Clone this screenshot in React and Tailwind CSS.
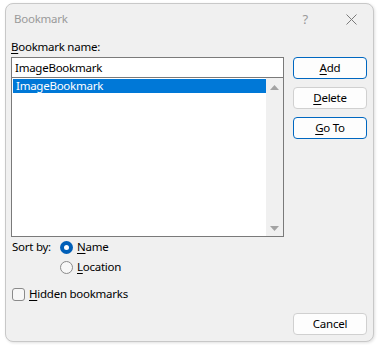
import React from 'react'

function Key({ children }) {
  return <span className="underline underline-offset-[2px] decoration-[1px]">{children}</span>
}

function Button({ primary, children }) {
  return (
    <button
      className={
        primary
          ? 'h-[22px] w-[74px] rounded-[4px] border border-[#0067c0] bg-[#fdfdfd] leading-[16px] text-black'
          : 'h-[22px] w-[74px] rounded-[4px] border border-[#d0d0d0] bg-[#fdfdfd] leading-[16px] text-black'
      }
    >
      {children}
    </button>
  )
}

function Radio({ checked, children }) {
  return (
    <div className="flex h-[16px] items-center gap-[4px]">
      {checked ? (
        <span className="flex h-[13px] w-[13px] items-center justify-center rounded-full bg-[#005fb8]">
          <span className="h-[5px] w-[5px] rounded-full bg-white" />
        </span>
      ) : (
        <span className="h-[13px] w-[13px] rounded-full border border-[#8a8a8a] bg-[#f7f7f7]" />
      )}
      <span>{children}</span>
    </div>
  )
}

export default function App() {
  return (
    <div className="h-[345px] w-[378px] bg-white pl-[5px] pt-[3px] font-['Noto_Sans',sans-serif] text-[11.5px] leading-[16px] tracking-[-0.25px] text-black">
      <div className="flex h-[339px] w-[369px] flex-col rounded-[8px] border border-[#c8c8c8] bg-[#f0f0f0] shadow-[1px_1px_3px_rgba(0,0,0,0.12)]">
        <div className="flex h-[30px] items-center pl-[8px] pr-[16px] text-[#9a9a9a]">
          <span className="flex-1">Bookmark</span>
          <span className="mr-[38px] text-[13px]">?</span>
          <svg width="11" height="11" viewBox="0 0 11 11" className="text-[#7a7a7a]">
            <path d="M0.5 0.5 L10.5 10.5 M10.5 0.5 L0.5 10.5" stroke="currentColor" strokeWidth="1" />
          </svg>
        </div>

        <div className="pl-[5px] pt-[5px]">
          <div className="h-[16px]">
            <Key>B</Key>ookmark name:
          </div>
          <div className="mt-[2px] flex gap-[9px]">
            <div className="flex w-[273px] flex-col">
              <div className="flex h-[20px] items-center border border-b-0 border-[#7a7a7a] bg-white pl-[3px]">
                ImageBookmark
              </div>
              <div className="flex h-[160px] border border-[#7a7a7a] bg-white">
                <div className="flex-1 pl-[1px] pt-[1px]">
                  <div className="flex h-[14px] items-center bg-[#0078d7] pl-[3px] text-white">ImageBookmark</div>
                </div>
                <div className="flex w-[17px] flex-col items-center justify-between bg-[#f0f0f0] pb-[5px] pt-[7px]">
                  <svg width="9" height="5" viewBox="0 0 9 5">
                    <path d="M4.5 0 L9 5 L0 5 Z" fill="#a3a3a3" />
                  </svg>
                  <svg width="9" height="5" viewBox="0 0 9 5">
                    <path d="M0 0 L9 0 L4.5 5 Z" fill="#a3a3a3" />
                  </svg>
                </div>
              </div>

              <div className="mt-[2px] flex">
                <span className="w-[49px] pl-[1px]">Sort by:</span>
                <div className="flex flex-col gap-[4px]">
                  <Radio checked>
                    <Key>N</Key>ame
                  </Radio>
                  <Radio>
                    <Key>L</Key>ocation
                  </Radio>
                </div>
              </div>

              <div className="mt-[11px] flex h-[16px] items-center gap-[4px] pl-[1px]">
                <span className="h-[13px] w-[13px] rounded-[3px] border border-[#8a8a8a] bg-[#f7f7f7]" />
                <span>
                  <Key>H</Key>idden bookmarks
                </span>
              </div>
            </div>

            <div className="flex flex-col gap-[8px]">
              <Button primary>
                <Key>A</Key>dd
              </Button>
              <Button>
                <Key>D</Key>elete
              </Button>
              <Button primary>
                <Key>G</Key>o To
              </Button>
            </div>
          </div>

          <div className="mt-[11px] flex justify-end pr-[6px]">
            <Button>Cancel</Button>
          </div>
        </div>
      </div>
    </div>
  )
}
